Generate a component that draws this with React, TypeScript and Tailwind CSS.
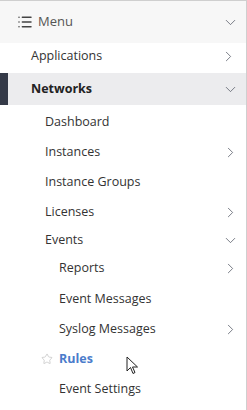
import { ChevronDown, ChevronRight, List, Star } from 'lucide-react'

// Side navigation menu

interface NavItem {
  label: string
  indent: number
  chevron?: 'right' | 'down'
  active?: boolean
  starred?: boolean
  rowClass: string
}

const items: NavItem[] = [
  { label: 'Dashboard', indent: 45, rowClass: 'h-[30px]' },
  { label: 'Instances', indent: 45, chevron: 'right', rowClass: 'h-[30px]' },
  { label: 'Instance Groups', indent: 45, rowClass: 'h-[30px]' },
  { label: 'Licenses', indent: 45, chevron: 'right', rowClass: 'h-[30px]' },
  { label: 'Events', indent: 45, chevron: 'down', rowClass: 'h-[26px]' },
  { label: 'Reports', indent: 59, chevron: 'right', rowClass: 'h-[31px]' },
  { label: 'Event Messages', indent: 59, rowClass: 'h-[30px]' },
  { label: 'Syslog Messages', indent: 59, chevron: 'right', rowClass: 'h-[30px]' },
  { label: 'Rules', indent: 59, active: true, starred: true, rowClass: 'h-[30px]' },
  { label: 'Event Settings', indent: 59, rowClass: 'h-[30px]' },
]

function Chevron({ dir }: { dir?: 'right' | 'down' }) {
  if (dir === 'right') return <ChevronRight className="w-[17px] h-[17px] text-[#555a66]" strokeWidth={1.1} />
  if (dir === 'down') return <ChevronDown className="w-[17px] h-[17px] text-[#555a66]" strokeWidth={1.1} />
  return null
}

export default function App() {
  return (
    <div
      className="relative w-[247px] h-[410px] bg-white border-t border-r border-[#cfcfcf] overflow-hidden text-[12.5px] text-[#333333]"
      style={{ fontFamily: '"Open Sans", "Noto Sans", sans-serif' }}
    >
      <div className="flex items-center h-[42px] bg-[#f7f7f7] pl-[17px] pr-[7px]">
        <List className="w-[16px] h-[16px] text-[#444]" strokeWidth={2.2} />
        <span className="ml-[5px] text-[#555] text-[13px]">Menu</span>
        <span className="ml-auto">
          <Chevron dir="down" />
        </span>
      </div>

      <div className="flex items-center h-[30px] pl-[31px] pr-[9px] pb-[3px]">
        <span>Applications</span>
        <span className="ml-auto">
          <Chevron dir="right" />
        </span>
      </div>

      <div className="flex items-center h-[32px] bg-[#ececee]">
        <div className="w-[8px] h-full bg-[#343a48]" />
        <span className="ml-[23px] font-bold text-[#222]">Networks</span>
        <span className="ml-auto mr-[7px]">
          <Chevron dir="down" />
        </span>
      </div>

      <div className="pt-[2px]">
        {items.map((item) => (
          <div
            key={item.label}
            className={`relative flex items-center pr-[7px] ${item.rowClass}`}
            style={{ paddingLeft: item.indent }}
          >
            {item.starred && (
              <Star className="absolute left-[41px] w-[12px] h-[12px] text-[#bbbbbb]" strokeWidth={1.3} />
            )}
            <span className={item.active ? 'font-bold text-[#4a7ccb]' : ''}>{item.label}</span>
            <span className="ml-auto">
              <Chevron dir={item.chevron} />
            </span>
          </div>
        ))}
      </div>

      <svg className="absolute left-[126px] top-[355px]" width="13" height="20" viewBox="0 0 13 20">
        <path d="M1 1 L1 15 L4.5 11.5 L7 17.5 L9 16.5 L6.5 11 L11.5 11 Z" fill="white" stroke="#222" strokeWidth="1" strokeLinejoin="round" />
      </svg>
    </div>
  )
}
